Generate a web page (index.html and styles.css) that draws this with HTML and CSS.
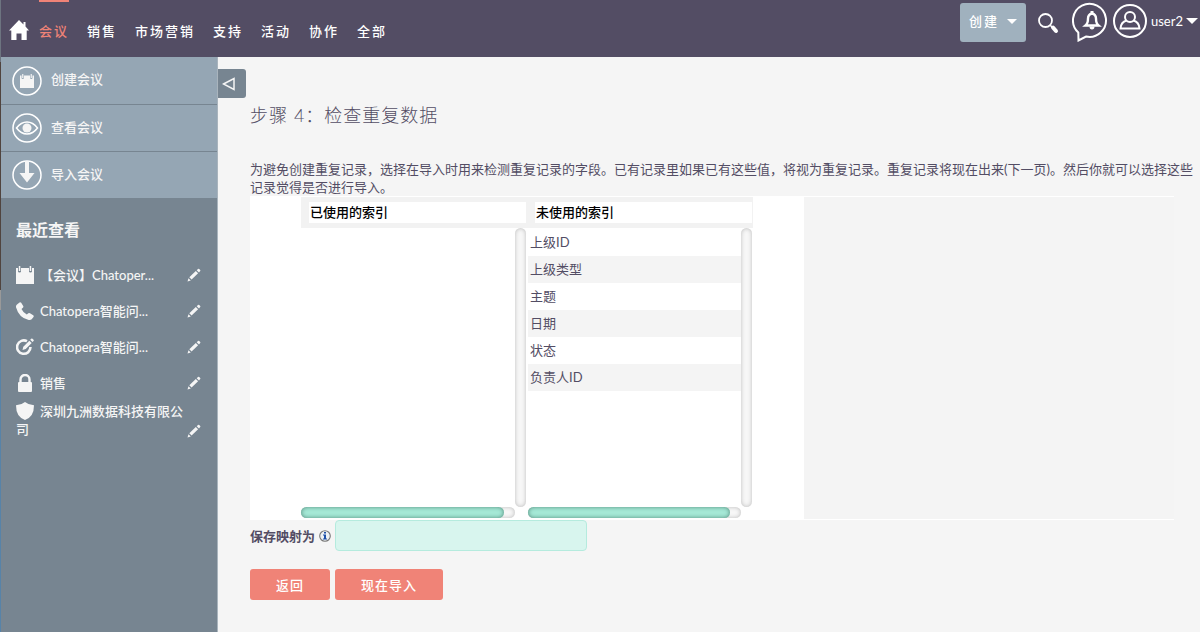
FILE: index.html
```html
<!DOCTYPE html>
<html lang="zh-CN">
<head>
<meta charset="utf-8">
<title>步骤 4：检查重复数据</title>
<link rel="stylesheet" href="styles.css">
</head>
<body>
<svg class="defs" aria-hidden="true">
  <symbol id="pencil" viewBox="0 0 14 14"><path d="M.5 13.500l1-3.300 2.300 2.300zM2.300 9.300l6.500-6.300 2.300 2.300-6.500 6.300zM9.700 2.200l1.300-1.300q.6-.5 1.200 0l1 1q.5.6 0 1.200L12 4.400z"/></symbol>
  <symbol id="calendar" viewBox="0 0 18 18"><path d="M0 2h2v3.500q0 1 1.500 1t1.500-1V2h8v3.500q0 1 1.500 1t1.500-1V2h2v16H0z"/><path d="M2.800 0h1.500v5H2.800zM13.700 0h1.500v5h-1.500z"/></symbol>
</svg>
<div class="page">
  <header class="topbar">
    <nav class="nav">
      <a class="home" href="#" aria-label="首页"><svg viewBox="0 0 20 20" width="20" height="20"><path fill="#fff" d="M10 0l4.500 4.500V2h2v4.500L20 10.500h-2.300V20H12.500v-6.500h-5V20H2.300v-9.500H0z"/></svg></a>
      <a class="nav-link active" href="#">会议</a>
      <a class="nav-link" href="#">销售</a>
      <a class="nav-link" href="#">市场营销</a>
      <a class="nav-link" href="#">支持</a>
      <a class="nav-link" href="#">活动</a>
      <a class="nav-link" href="#">协作</a>
      <a class="nav-link" href="#">全部</a>
    </nav>
    <div class="tools">
      <button class="create" type="button">创建<span class="caret"></span></button>
      <button class="icon-btn search" type="button" aria-label="搜索"><svg viewBox="0 0 22 22" width="22" height="22" fill="none" stroke="#fff"><circle cx="8.500" cy="8.500" r="6.500" stroke-width="1.800"/><path d="M13 13l2.500 2.500" stroke-width="1.500"/><path d="M16 15.500l3 3.500" stroke-width="4" stroke-linecap="round"/></svg></button>
      <button class="icon-btn" type="button" aria-label="通知"><svg viewBox="0 0 38 42" width="38" height="42" fill="none" stroke="#fff" stroke-width="2"><path d="M6.300 32.500A16.500 16.500 0 1 1 14 36.500L6.500 40.500z"/><path d="M13.500 25.500q2.500-2 2.500-7 0-4 4-5 4 1 4 5 0 5 2.500 7z" stroke-width="2.400"/><path d="M20 11v3" stroke-width="3"/><path d="M17.500 26.500h5q0 3-2.500 3t-2.500-3z" fill="#fff" stroke="none"/></svg></button>
      <button class="user" type="button"><svg viewBox="0 0 36 36" width="36" height="36" fill="none" stroke="#fff" stroke-width="2"><circle cx="18" cy="18" r="16"/><circle cx="18" cy="14" r="5"/><path d="M14.500 17.500Q9 19 8.500 25.500h19Q27 19 21.500 17.500"/></svg>user2<span class="caret wide"></span></button>
    </div>
  </header>
  <div class="body">
    <aside class="sidebar">
      <nav class="actions">
        <a href="#"><svg viewBox="0 0 30 30" width="30" height="30"><circle class="ring" cx="15" cy="15" r="14"/><use href="#calendar" x="8" y="8" width="14" height="14"/></svg><span>创建会议</span></a>
        <a href="#"><svg viewBox="0 0 30 30" width="30" height="30"><circle class="ring" cx="15" cy="15" r="14"/><path class="ring" d="M4.500 15Q9 9 15 9t10.500 6Q21 21 15 21T4.500 15z"/><circle cx="15" cy="15" r="4.500"/></svg><span>查看会议</span></a>
        <a href="#"><svg viewBox="0 0 30 30" width="30" height="30"><circle class="ring" cx="15" cy="15" r="14"/><path d="M13 1h4v12h5.500L15 22.500 7.500 13H13z"/></svg><span>导入会议</span></a>
      </nav>
      <h2>最近查看</h2>
      <ul class="recent">
        <li><svg class="kind" width="18" height="18"><use href="#calendar"/></svg><a href="#">【会议】Chatoper...</a><a class="edit" href="#" aria-label="编辑"><svg width="14" height="14"><use href="#pencil"/></svg></a></li>
        <li><svg class="kind" viewBox="0 0 18 18" width="18" height="18"><path d="M1 2.500L3.500.5q1-.7 1.700.3l2 3.200q.5 1-.3 1.700L5.500 7q1.500 3.500 5.300 5.500l1.500-1.300q.8-.6 1.700 0l3.200 2.100q1 .8.3 1.700l-1.800 2.200q-1 1-3 .7Q3 16 0 5.200q-.2-1.700 1-2.700z"/></svg><a href="#">Chatopera智能问...</a><a class="edit" href="#" aria-label="编辑"><svg width="14" height="14"><use href="#pencil"/></svg></a></li>
        <li><svg class="kind" viewBox="0 0 18 18" width="18" height="18"><path d="M11 3.200A6.700 6.700 0 1 0 14.500 9" fill="none" stroke="#f5f5f5" stroke-width="2.600"/><path d="M6.500 12l.8-3.300 6-6 2.400 2.400-6 6zM14.200 1.800l1-1q.7-.6 1.300 0l1 1q.6.700 0 1.300l-1 1z"/></svg><a href="#">Chatopera智能问...</a><a class="edit" href="#" aria-label="编辑"><svg width="14" height="14"><use href="#pencil"/></svg></a></li>
        <li><svg class="kind" viewBox="0 0 18 18" width="18" height="18"><path d="M4.500 9V5.500a4.500 4.500 0 0 1 9 0V9" fill="none" stroke="#f5f5f5" stroke-width="2.400"/><rect x="2" y="8" width="14" height="10" rx="1"/></svg><a href="#">销售</a><a class="edit" href="#" aria-label="编辑"><svg width="14" height="14"><use href="#pencil"/></svg></a></li>
        <li class="long"><a href="#"><svg class="kind" viewBox="0 0 18 18" width="18" height="18"><path d="M9 0q3.500 3 9 3.300Q18 15 9 18 0 15 0 3.300 5.500 3 9 0z"/></svg>深圳九洲数据科技有限公司</a><a class="edit" href="#" aria-label="编辑"><svg width="14" height="14"><use href="#pencil"/></svg></a></li>
      </ul>
    </aside>
    <main class="main">
      <button class="collapse" type="button" aria-label="收起侧栏"><svg viewBox="0 0 14 14" width="14" height="14"><path d="M1.500 7L12 1.500v11z" fill="none" stroke="#f5f5f5" stroke-width="1.500"/></svg></button>
      <h1>步骤 4：检查重复数据</h1>
      <p class="intro">为避免创建重复记录，选择在导入时用来检测重复记录的字段。已有记录里如果已有这些值，将视为重复记录。重复记录将现在出来(下一页)。然后你就可以选择这些<br>记录觉得是否进行导入。</p>
      <div class="band">
        <div class="panel">
          <section class="column">
            <h3>已使用的索引</h3>
            <div class="list"><ul></ul><div class="vbar"></div></div>
            <div class="hbar"><div class="thumb"></div></div>
          </section>
          <section class="column">
            <h3>未使用的索引</h3>
            <div class="list"><ul><li>上级ID</li><li>上级类型</li><li>主题</li><li>日期</li><li>状态</li><li>负责人ID</li></ul><div class="vbar"></div></div>
            <div class="hbar"><div class="thumb"></div></div>
          </section>
        </div>
      </div>
      <form>
        <div class="save">
          <label for="map">保存映射为</label>
          <svg viewBox="0 0 12 12" width="12" height="12"><circle cx="6" cy="6" r="5.300" fill="#eef2f4" stroke="#777" stroke-width="1.100"/><path d="M5 2h2v1.500H5zM4 4.500h3v4h1v1H4v-1h1v-3H4z" fill="#1c4fa8"/></svg>
          <input id="map" type="text">
        </div>
        <div class="buttons"><button type="button">返回</button><button type="submit">现在导入</button></div>
      </form>
    </main>
  </div>
</div>
</body>
</html>
```
FILE: styles.css
```css
* { box-sizing: border-box; }
html {
  min-height: 100%;
  background: linear-gradient(#6d7480 0 62px, #50443f 62px 290px, #999 290px 310px, #5783a8 310px);
}
body {
  margin: 0;
  padding-left: 1px;
  font: 13px/18px Lato, "Noto Sans CJK SC", sans-serif;
  color: #534d64;
}
a { color: inherit; text-decoration: none; }
button { font: inherit; color: #fff; border: 0; padding: 0; background: none; cursor: pointer; }
ul { list-style: none; margin: 0; padding: 0; }
svg { display: block; flex: none; }
.defs { position: absolute; width: 0; height: 0; }
.page { display: flex; flex-direction: column; min-height: 100vh; background: #f5f5f5; }

.topbar { display: flex; justify-content: space-between; height: 57px; background: #534d64; color: #fff; }
.nav { display: flex; gap: 18px; padding-left: 8px; }
.home { padding-top: 20px; margin-right: -8px; }
.nav-link { padding-top: 20px; border-top: 2px solid transparent; letter-spacing: 2px; font-weight: 500; }
.nav-link.active { color: #f08377; border-color: #f08377; }
.tools { display: flex; align-items: flex-start; padding-right: 2px; }
.create {
  display: flex; align-items: center; gap: 8px;
  height: 39px; margin-top: 3px; padding: 0 9px 3px; margin-right: 11px;
  border-radius: 3px; background: #a0b1be; letter-spacing: 2px; font-weight: 500;
}
.caret { border: 5px solid transparent; border-top-color: #fff; border-bottom: 0; }
.caret.wide { border-width: 6px 6px 0; }
.icon-btn { margin-right: 2px; }
.search { margin: 12px 13px 0 0; }
.user { display: flex; align-items: center; margin-top: 3px; gap: 3px; }

.body { display: flex; flex: 1; }
.sidebar { flex: none; width: 217px; background: #778591; color: #f5f5f5; border-right: 1px solid #a9b4bd; font-weight: 500; }
.sidebar svg { fill: #f5f5f5; }
.actions { background: #95a6b4; }
.actions a { display: flex; align-items: center; gap: 9px; height: 47px; padding-left: 11px; }
.actions a + a { border-top: 1px solid #778591; }
.actions span { padding-bottom: 3px; }
.actions .ring { fill: none; stroke: #fff; stroke-width: 1.500; }
.sidebar h2 { margin: 0; padding: 22px 15px 17px; font-size: 16px; line-height: 20px; }
.recent li { display: flex; align-items: center; gap: 6px; height: 36px; padding: 0 16px 0 15px; }
.recent .edit { margin-left: auto; }
.recent .long { align-items: flex-end; height: auto; gap: 2px; padding-top: 1px; }
.long .kind { float: left; margin-right: 6px; }

.main { position: relative; flex: 1; min-width: 0; padding: 46px 26px 30px 32px; }
.collapse {
  position: absolute; left: 0; top: 12px; width: 28px; height: 29px;
  padding-left: 4px; border-radius: 0 3px 3px 0; background: #778591;
}
h1 { margin: 0 0 33px; font-size: 18px; line-height: 24px; font-weight: 300; letter-spacing: 1px; }
.intro { margin: 0 -26px 0 0; }
.band { border: solid #fff; border-width: 1px 0; display: flex; background: #f4f4f4; }
.panel { display: flex; padding: 0 51px 1px; background: #fff; }
.column { width: 226px; }
h3 {
  margin: 0; padding: 0 0 0 1px; font-size: 13px; line-height: 21px; font-weight: 500; color: #000;
  border: solid #f2f2f2; border-width: 5px 1px 5px 8px; background: #fff;
}
.list { display: flex; height: 279px; margin-right: 1px; }
.list ul { flex: 1; padding-top: 1px; }
.list li { line-height: 27px; padding-left: 2px; }
.list li:nth-child(even) { background: #f4f4f4; }
.column + .column .list, .column + .column .hbar { margin-left: 1px; }
.vbar, .hbar { border-radius: 6px; background: #f7f7f7; box-shadow: inset 0 0 4px #bbb; }
.vbar { width: 11px; }
.hbar { height: 11px; margin-right: 12px; }
.thumb { width: 95%; height: 11px; border-radius: 6px; background: #a5e8d6; box-shadow: inset 0 0 4px #528a7a; }
.save { display: flex; align-items: center; gap: 4px; }
.save label { font-weight: 700; }
.save input {
  width: 252px; height: 31px; margin: 0; padding: 0 8px; font: inherit; color: inherit;
  border: 1px solid #b5ebde; border-radius: 4px; background: #d8f5ee;
}
.buttons { display: flex; gap: 5px; margin-top: 18px; }
.buttons button { height: 31px; padding: 0 26px; border-radius: 3px; background: #f08377; letter-spacing: 1px; font-weight: 500; }
```
